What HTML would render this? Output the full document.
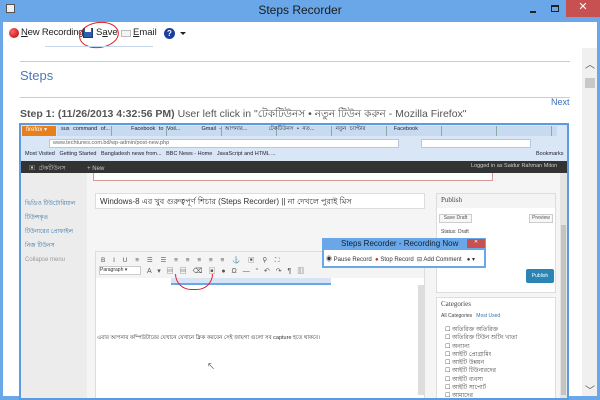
<!DOCTYPE html>
<html><head><meta charset="utf-8"><style>
*{margin:0;padding:0;box-sizing:border-box}
body{width:600px;height:400px;overflow:hidden;background:#6aa7e8;font-family:"Liberation Sans","Noto Sans CJK SC",sans-serif;position:relative}
.a{position:absolute}
.t{white-space:nowrap}
</style></head><body>
<!-- title bar -->
<div class="a" style="left:6px;top:4px;width:9px;height:9px;background:#eee;border:1px solid #555"></div>
<div class="a t" style="left:0;width:600px;top:3px;text-align:center;font-size:12px;color:#1a1a1a">Steps Recorder</div>
<div class="a" style="left:530px;top:11px;width:6px;height:2px;background:#222"></div>
<div class="a" style="left:551px;top:5px;width:8px;height:7px;border:1px solid #222;border-top-width:2px"></div>
<div class="a" style="left:566px;top:0;width:34px;height:17px;background:#c75050;color:#fff;font-size:11px;text-align:center;line-height:15px">✕</div>
<!-- client -->
<div class="a" style="left:3px;top:22px;width:594px;height:374px;background:#fff"></div>
<!-- toolbar -->
<div class="a" style="left:9px;top:28px;width:10px;height:10px;border-radius:50%;background:radial-gradient(circle at 35% 35%,#f66,#b00)"></div>
<div class="a t" style="left:21px;top:27px;font-size:9.5px;color:#222;letter-spacing:-0.2px"><u>N</u>ew Recording</div>
<div class="a" style="left:83px;top:28px;width:10px;height:10px;background:#2b5fb0;border:1px solid #1a3d7a"></div>
<div class="a" style="left:85px;top:28px;width:6px;height:4px;background:#fff"></div>
<div class="a t" style="left:96px;top:27px;font-size:9.5px;color:#222">S<u>a</u>ve</div>
<div class="a" style="left:79px;top:22px;width:40px;height:26px;border:1.5px solid #e02020;border-radius:50%;transform:rotate(-8deg)"></div>
<div class="a" style="left:121px;top:30px;width:10px;height:7px;border:1px solid #bbb;background:#f4f4f4"></div>
<div class="a t" style="left:133px;top:27px;font-size:9.5px;color:#222"><u>E</u>mail</div>
<div class="a" style="left:164px;top:28px;width:11px;height:11px;border-radius:50%;background:#1a3fa0;color:#fff;font-size:8px;text-align:center;line-height:11px;font-weight:bold">?</div>
<div class="a" style="left:180px;top:32px;border:3px solid transparent;border-top:3px solid #222"></div>
<!-- scrollbar -->
<div class="a" style="left:582px;top:48px;width:15px;height:348px;background:#f0f0f0"></div>
<div class="a t" style="left:585px;top:56px;font-size:10px;color:#555">︿</div>
<div class="a" style="left:585px;top:78px;width:10px;height:10px;background:#c8c8c8"></div>
<div class="a t" style="left:585px;top:382px;font-size:10px;color:#555">﹀</div>
<!-- content -->
<div class="a" style="left:45px;top:46px;width:108px;height:1px;background:#c5d5ea"></div>
<div class="a" style="left:20px;top:61px;width:550px;height:1px;background:#ccc"></div>
<div class="a t" style="left:20px;top:68px;font-size:13px;color:#4e79b4">Steps</div>
<div class="a" style="left:20px;top:97px;width:550px;height:1px;background:#ccc"></div>
<div class="a t" style="left:551px;top:97px;font-size:9px;color:#3a6fb5">Next</div>
<div class="a t" style="left:20px;top:107px;font-size:10.5px;color:#555"><b>Step 1: (11/26/2013 4:32:56 PM)</b> User left click in "টেকটিউনস • নতুন টিউন করুন - Mozilla Firefox"</div>
<!-- screenshot -->
<div class="a" style="left:19px;top:123px;width:550px;height:277px;background:#fff;border:2px solid #5b9be0;overflow:hidden">
 <div class="a" style="left:0;top:0;width:546px;height:36px;background:#d8e6f5"></div>
 <div class="a" style="left:1px;top:1px;width:34px;height:10px;background:#e7801c"></div>
 <div class="a t" style="left:5px;top:1px;font-size:6px;color:#fff">firefox ▾</div>
 <div class="a" style="left:36px;top:1px;width:500px;height:10px;background:repeating-linear-gradient(90deg,#c8daf0 0 54px,#8aa 54px 55px)"></div>
 <div class="a t" style="left:40px;top:1px;font-size:5.5px;color:#223;word-spacing:2px">sus command of...&nbsp;&nbsp;&nbsp;&nbsp;&nbsp;&nbsp;Facebook to Voil...&nbsp;&nbsp;&nbsp;&nbsp;&nbsp;&nbsp;Gmail - আপনার...&nbsp;&nbsp;&nbsp;&nbsp;&nbsp;&nbsp;টেকটিউনস • নত...&nbsp;&nbsp;&nbsp;&nbsp;&nbsp;&nbsp;নতুন চ্যাপ্টার&nbsp;&nbsp;&nbsp;&nbsp;&nbsp;&nbsp;&nbsp;&nbsp;Facebook</div>
 <div class="a" style="left:28px;top:14px;width:350px;height:9px;background:#fff;border:1px solid #b8c8dc"></div>
 <div class="a t" style="left:32px;top:15px;font-size:5.5px;color:#666">www.techtunes.com.bd/wp-admin/post-new.php</div>
 <div class="a" style="left:400px;top:14px;width:110px;height:9px;background:#fff;border:1px solid #b8c8dc"></div>
 <div class="a t" style="left:4px;top:26px;font-size:5.5px;color:#223">Most Visited &nbsp; Getting Started &nbsp; Bangladesh news from... &nbsp; BBC News - Home &nbsp; JavaScript and HTML ...</div>
 <div class="a t" style="left:515px;top:26px;font-size:5.5px;color:#223">Bookmarks</div>
 <div class="a" style="left:0;top:36px;width:546px;height:12px;background:#333"></div>
 <div class="a t" style="left:8px;top:38px;font-size:6px;color:#ccc">▣ &nbsp;টেকটিউনস &nbsp;&nbsp;&nbsp;&nbsp;&nbsp;&nbsp;&nbsp;&nbsp;&nbsp;&nbsp;&nbsp;&nbsp;+ New</div>
 <div class="a t" style="left:450px;top:38px;font-size:5.5px;color:#ccc">Logged in as Saidur Rahman Miton</div>
 <div class="a" style="left:0;top:48px;width:66px;height:230px;background:#ececec"></div>
 <div class="a t" style="left:4px;top:72px;font-size:6px;color:#3575a8;line-height:14px">ভিডিও টিউটোরিয়াল<br>টিউন্সকৃত<br>টিউনারের প্রোফাইল<br>নিজ টিউনস<br><span style="color:#999">Collapse menu</span></div>
 <div class="a" style="left:66px;top:48px;width:474px;height:230px;background:#f5f5f5"></div>
 <div class="a" style="left:72px;top:48px;width:400px;height:8px;border:1px solid #d99;border-top:none;background:#fff"></div>
 <div class="a" style="left:74px;top:68px;width:330px;height:16px;background:#fff;border:1px solid #ddd"></div>
 <div class="a t" style="left:79px;top:71px;font-size:8px;color:#333">Windows-8 এর খুব গুরুত্বপূর্ণ শিচার (Steps Recorder) || না দেখলে পুরাই মিস</div>
 <div class="a t" style="left:398px;top:117px;width:14px;height:9px;background:#eee;font-size:5px;color:#555">Visual</div>
 <div class="a" style="left:74px;top:126px;width:330px;height:152px;background:#fff;border:1px solid #ddd"></div>
 <div class="a" style="left:75px;top:127px;width:328px;height:26px;background:#f4f4f4"></div>
 <div class="a t" style="left:80px;top:129px;font-size:6.5px;color:#555;letter-spacing:3px">B I U ≡ ☰ ☰ ≡ ≡ ≡ ≡ ≡ ⚓ ▣ ⚲ ⛶</div>
 <div class="a" style="left:78px;top:141px;width:42px;height:9px;background:#fff;border:1px solid #ccc;font-size:5px;color:#333">Paragraph ▾</div>
 <div class="a t" style="left:126px;top:141px;font-size:7px;color:#555;letter-spacing:2px">A ▾ ▤ ▤ ⌫ ▣ ● Ω — “ ↶ ↷ ¶ ▥</div>
 <div class="a" style="left:150px;top:153px;width:160px;height:7px;background:#d6e4f5;border-bottom:2px solid #6aa7e8"></div>
 <div class="a" style="left:154px;top:149px;width:38px;height:16px;border:1px solid #d23;border-top:none;border-radius:0 0 20px 20px"></div>
 <div class="a t" style="left:76px;top:210px;font-size:5.5px;color:#333">এবার আপনার কম্পিউটারের যেখানে যেখানে ক্লিক করবেন সেই জায়গা গুলো সব capture হতে থাকবে।</div>
 <div class="a t" style="left:186px;top:236px;font-size:8px;color:#444">↖</div>
 <div class="a" style="left:397px;top:160px;width:6px;height:110px;background:#ddd"></div>
 <div class="a" style="left:415px;top:68px;width:120px;height:100px;background:#fff;border:1px solid #ddd"></div>
 <div class="a" style="left:416px;top:69px;width:118px;height:14px;background:#f4f4f4"></div>
 <div class="a t" style="left:420px;top:71px;font-size:7px;color:#444;font-family:'Liberation Serif',serif">Publish</div>
 <div class="a" style="left:418px;top:89px;width:33px;height:9px;border:1px solid #ccc;background:#f7f7f7;font-size:5px;color:#555;text-align:center">Save Draft</div>
 <div class="a" style="left:508px;top:89px;width:24px;height:9px;border:1px solid #ccc;background:#f7f7f7;font-size:5px;color:#555;text-align:center">Preview</div>
 <div class="a t" style="left:420px;top:104px;font-size:5px;color:#444">Status: Draft</div>
 <div class="a" style="left:505px;top:144px;width:28px;height:14px;background:#2a85b5;border-radius:2px;font-size:5px;color:#fff;text-align:center;line-height:14px">Publish</div>
 <div class="a" style="left:415px;top:172px;width:120px;height:110px;background:#fff;border:1px solid #ddd"></div>
 <div class="a t" style="left:420px;top:175px;font-size:7px;color:#444;font-family:'Liberation Serif',serif">Categories</div>
 <div class="a t" style="left:420px;top:188px;font-size:5px;color:#444">All Categories &nbsp;&nbsp;<span style="color:#3575a8">Most Used</span></div>
 <div class="a t" style="left:424px;top:201px;font-size:6px;color:#444;line-height:8.3px">☐ অতিরিক্ত অতিরিক্ত<br>☐ অতিরিক্ত টিউন শুটিং খাতা<br>☐ অন্যান্য<br>☐ আইটি প্রোগ্রামিং<br>☐ আইটি উন্নয়ন<br>☐ আইটি টিউনারদের<br>☐ আইটি ব্যবসা<br>☐ আইটি সাপোর্ট<br>☐ আমাদের</div>
 <div class="a" style="left:539px;top:48px;width:7px;height:230px;background:#e4e4e4"></div>
 <div class="a" style="left:540px;top:100px;width:5px;height:170px;background:#c4c4c4"></div>
 <!-- mini steps recorder -->
 <div class="a" style="left:301px;top:113px;width:164px;height:30px;background:#6aa7e8"></div>
 <div class="a t" style="left:320px;top:114px;font-size:8px;color:#123">Steps Recorder - Recording Now</div>
 <div class="a" style="left:446px;top:114px;width:18px;height:9px;background:#c75050;color:#fff;font-size:5px;text-align:center">✕</div>
 <div class="a" style="left:303px;top:125px;width:160px;height:16px;background:#fff"></div>
 <div class="a t" style="left:305px;top:129px;font-size:6px;color:#333">◉ Pause Record &nbsp;<span style="color:#c22">●</span> Stop Record &nbsp;⊟ Add Comment &nbsp;&nbsp;● ▾</div>
</div>
</body></html>
